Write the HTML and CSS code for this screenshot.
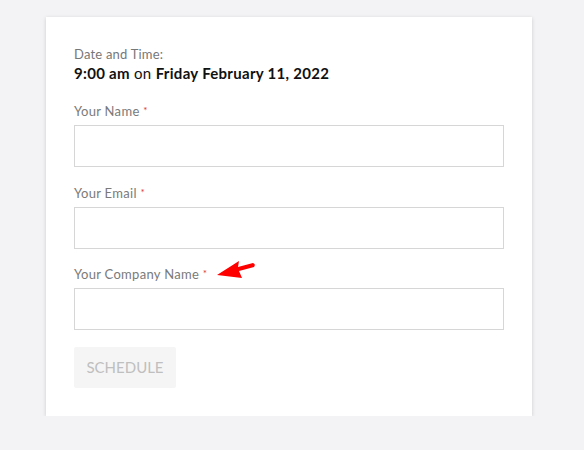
FILE: index.html
```html
<!DOCTYPE html>
<html>
<head>
<meta charset="utf-8">
<link rel="stylesheet" href="styles.css">
</head>
<body>
<div class="card">
  <div class="dt-label">Date and Time:</div>
  <div class="dt-value"><b>9:00 am</b> on <b>Friday February 11, 2022</b></div>
  <div class="field">
    <label class="label">Your Name <span class="req">*</span></label>
    <div class="input"></div>
  </div>
  <div class="field">
    <label class="label">Your Email <span class="req">*</span></label>
    <div class="input"></div>
  </div>
  <div class="field company">
    <label class="label">Your Company Name <span class="req">*</span></label>
    <svg class="arrow" width="44" height="24" viewBox="0 0 44 24">
      <path d="M2 19 L24 5 L23 11 L38 7 Q41 8 39 11 L24 15 L27 22 Z" fill="#ff0000"/>
    </svg>
    <div class="input"></div>
  </div>
  <div class="btn">SCHEDULE</div>
</div>
</body>
</html>
```
FILE: styles.css
```css
html, body {
  margin: 0;
  padding: 0;
  background: #f3f3f5;
  font-family: "Lato", "Liberation Sans", sans-serif;
}
.card {
  margin: 17px 0 0 46px;
  width: 486px;
  box-sizing: border-box;
  background: #fff;
  box-shadow: 0 1px 4px rgba(0, 0, 0, 0.16);
  padding: 29px 28px 28px;
}
.dt-label {
  font-size: 13px;
  line-height: 16px;
  color: #777;
  letter-spacing: 0.2px;
}
.dt-value {
  margin-top: 1px;
  font-size: 15px;
  line-height: 20px;
  color: #111;
  letter-spacing: 0.3px;
}
.dt-value b {
  font-weight: 700;
}
.field {
  margin-top: 19px;
  position: relative;
}
.field + .field {
  margin-top: 17px;
}
.field.company {
  margin-top: 16px;
}
.label {
  display: block;
  font-size: 13px;
  line-height: 16px;
  color: #7a7a7a;
  margin-bottom: 6px;
  letter-spacing: 0.3px;
}
.req {
  color: #d9383a;
  font-size: 10px;
  vertical-align: 2px;
}
.input {
  height: 42px;
  box-sizing: border-box;
  border: 1px solid #d6d6d6;
  background: #fff;
}
.arrow {
  position: absolute;
  left: 141px;
  top: -9px;
}
.btn {
  margin-top: 17px;
  width: 102px;
  height: 41px;
  box-sizing: border-box;
  background: #f5f5f5;
  border-radius: 2px;
  color: #bfbfbf;
  font-size: 15px;
  line-height: 41px;
  text-align: center;
}
```
